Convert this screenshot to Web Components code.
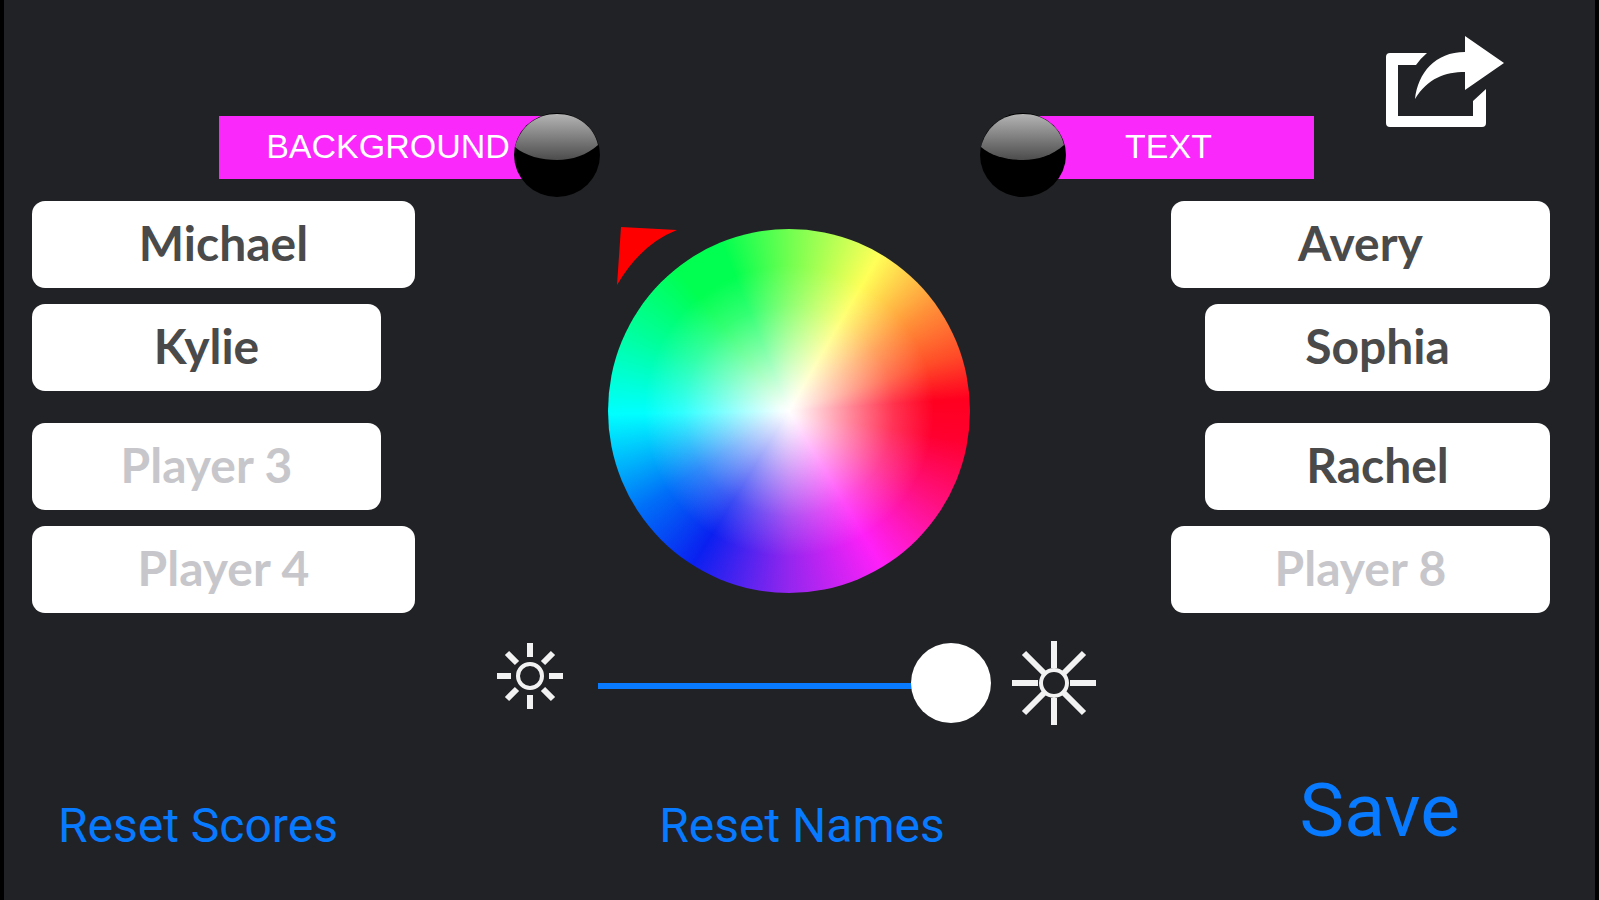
<!DOCTYPE html>
<html lang="en">
<head>
<meta charset="utf-8">
<title>Game settings</title>
<style>
  body { margin: 0; background: #000; }
</style>
</head>
<body>
<settings-screen></settings-screen>

<script>
const define = (name, html, setup) => {
  const template = document.createElement('template');
  template.innerHTML = html;
  customElements.define(name, class extends HTMLElement {
    connectedCallback() {
      if (this.shadowRoot) return;
      this.attachShadow({ mode: 'open' }).append(template.content.cloneNode(true));
      if (setup) setup(this, this.shadowRoot);
    }
  });
};

/* Coloured tab with a glossy ball at its inner end */
define('color-tab', `
  <style>
    :host { display: block; }
    button {
      display: flex; align-items: center; width: 100%; padding: 0; border: 0;
      background: none; color: #fff; cursor: pointer;
      font: 34px/40px "Helvetica Neue", "Liberation Sans", Arial, sans-serif;
    }
    .bar { flex: 1; height: 63px; box-sizing: border-box; padding-top: 10px; margin-bottom: 16px;
           background: #fa28fa; text-align: center; }
    svg { display: block; position: relative; flex: none; width: 88px; height: 84px; margin-left: -44px; }
    :host([side="right"]) button { flex-direction: row-reverse; }
    :host([side="right"]) svg { margin: 0 -44px 0 0; }
  </style>
  <button type="button">
    <span class="bar"><slot></slot></span>
    <svg viewBox="0 0 88 84" aria-hidden="true">
      <defs>
        <linearGradient id="gloss" x1="0" y1="0" x2="0" y2="1">
          <stop offset="0" stop-color="#b4b4b4"/><stop offset="1" stop-color="#4c4c4c"/>
        </linearGradient>
      </defs>
      <ellipse cx="44" cy="42" rx="43" ry="42" fill="#000"/>
      <path d="M2 34C7 14 23 1 44 1s37 13 41 31C74 42 59 47 44 47S12 43 2 34z" fill="url(#gloss)"/>
    </svg>
  </button>`);

define('share-button', `
  <style>
    :host { display: block; }
    button { display: block; padding: 0; border: 0; background: none; cursor: pointer; }
    svg { display: block; width: 120px; height: 93px; }
  </style>
  <button type="button" aria-label="Share">
    <svg viewBox="0 0 120 93" fill="#fff" aria-hidden="true">
      <path d="M5 18H42Q36 23 31 30H13V81H88V66L101 54V88Q101 92 97 92H5Q1 92 1 88V22Q1 18 5 18z"/>
      <path d="M80 1L119 28L80 55V37C60 37 43 43 30 64C33 38 50 17 80 17z"/>
    </svg>
  </button>`);

define('player-field', `
  <style>
    :host { display: block; }
    input {
      display: block; width: 100%; height: 87px; box-sizing: border-box; margin: 0;
      padding: 0 8px 4px; border: 0; border-radius: 13px; background: #fff; color: #4a4a4a;
      text-align: center; outline: 0;
      font: bold 48px/64px "Marker Felt", Lato, "Liberation Sans", sans-serif;
    }
    input::placeholder { color: #c7c7cb; opacity: 1; }
  </style>
  <input type="text">`, (host, root) => {
  const input = root.querySelector('input');
  input.setAttribute('aria-label', host.getAttribute('label'));
  input.placeholder = host.getAttribute('label');
  input.value = host.getAttribute('name') || '';
});

define('player-column', `
  <style>
    :host { display: flex; flex-direction: column; gap: 16px; }
    ::slotted(.inner) { width: calc(100% - 34px); }
    ::slotted(.lower) { margin-top: 16px; }
    :host([side="right"]) { align-items: flex-end; }
    ::slotted(:not(.inner)) { width: 100%; }
  </style>
  <slot></slot>`);

define('color-wheel', `
  <style>
    :host { display: block; position: relative; width: 362px; height: 364px; }
    .disc {
      width: 100%; height: 100%; border-radius: 50%;
      background:
        radial-gradient(closest-side, #fff 0, rgba(255,255,255,.95) 5%, rgba(255,255,255,.5) 36%, rgba(255,255,255,.2) 58%, rgba(255,255,255,0) 80%),
        conic-gradient(#70ff50 0deg, #ffff58 30deg, #ff9038 54deg, #ff4a28 72deg, #ff0020 86deg, #ff0030 100deg,
          #ff1080 122deg, #ff20f8 149deg, #9426ee 180deg, #0a20f0 212deg, #0070f8 237deg,
          #00ffff 269deg, #00ff98 298deg, #00ff50 322deg, #00ff50 338deg, #70ff50 360deg);
    }
    svg { position: absolute; left: 8px; top: -3px; width: 63px; height: 60px; }
  </style>
  <div class="disc" role="img" aria-label="Color wheel"></div>
  <svg viewBox="0 0 63 60" aria-hidden="true"><path d="M5 1L61 4Q25 18 1 59z" fill="#f00"/></svg>`);

define('brightness-slider', `
  <style>
    :host { display: flex; align-items: center; }
    svg { display: block; flex: none; fill: none; stroke: #f2f2f2; }
    .dim { width: 66px; height: 70px; align-self: flex-start; margin-right: 35px; }
    .bright { width: 84px; height: 84px; margin-left: 21px; }
    input {
      flex: 1; min-width: 0; height: 80px; margin: 0; appearance: none; -webkit-appearance: none;
      background: linear-gradient(#087aff, #087aff) 0 40px / calc(100% - 20px) 6px no-repeat;
    }
    input::-webkit-slider-thumb {
      -webkit-appearance: none; width: 80px; height: 80px; border-radius: 50%; background: #fff;
    }
  </style>
  <svg class="dim" viewBox="0 0 66 70" stroke-width="6" aria-hidden="true">
    <circle cx="33" cy="35" r="12" stroke-width="4"/>
    <path d="M33 2v14M33 54v14M0 35h14M52 35h14M10 12l10 10M46 48l10 10M56 12L46 22M20 48L10 58"/>
  </svg>
  <input type="range" min="0" max="100" value="100" aria-label="Brightness">
  <svg class="bright" viewBox="0 0 84 84" stroke-width="6" aria-hidden="true">
    <circle cx="42" cy="42" r="13" stroke-width="4"/>
    <path d="M42 0v27M42 57v27M0 42h26M58 42h26M12 12l20 20M52 52l20 20M72 12L52 32M32 52L12 72"/>
  </svg>`);

define('text-action', `
  <style>
    :host { display: block; }
    button {
      display: block; padding: 0; border: 0; background: none; color: #087aff; cursor: pointer;
      font: 48px/56px Roboto, "Liberation Sans", sans-serif; white-space: nowrap;
    }
    :host([size="large"]) button { font-size: 75px; line-height: 88px; }
  </style>
  <button type="button"><slot></slot></button>`);

define('settings-screen', `
  <style>
    :host {
      display: flex; flex-direction: column; box-sizing: border-box; min-height: 100vh;
      margin: 0 4px; background: #202225;
    }
    header {
      display: flex; align-items: flex-end; box-sizing: border-box; height: 201px;
      padding: 35px 90px 4px 215px;
    }
    .background { width: 382px; }
    .text { width: 335px; margin-left: auto; }
    share-button { align-self: flex-start; margin-left: 71px; }
    main {
      display: grid; grid-template-columns: 383px 1fr 379px; padding: 0 45px 0 28px;
    }
    .picker { display: flex; flex-direction: column; align-items: center; padding-top: 28px; gap: 48px; }
    color-wheel { margin-right: 8px; }
    brightness-slider { width: 599px; margin-left: 6px; }
    footer {
      display: grid; grid-template-columns: 1fr auto 1fr; align-items: end;
      margin-top: auto; padding: 0 49px 46px 54px;
    }
    .save { justify-self: end; margin-right: 86px; }
  </style>
  <header>
    <color-tab class="background" side="left">BACKGROUND</color-tab>
    <color-tab class="text" side="right">TEXT</color-tab>
    <share-button></share-button>
  </header>
  <main>
    <player-column side="left">
      <player-field label="Player 1" name="Michael"></player-field>
      <player-field class="inner" label="Player 2" name="Kylie"></player-field>
      <player-field class="inner lower" label="Player 3"></player-field>
      <player-field label="Player 4"></player-field>
    </player-column>
    <div class="picker">
      <color-wheel></color-wheel>
      <brightness-slider></brightness-slider>
    </div>
    <player-column side="right">
      <player-field label="Player 5" name="Avery"></player-field>
      <player-field class="inner" label="Player 6" name="Sophia"></player-field>
      <player-field class="inner lower" label="Player 7" name="Rachel"></player-field>
      <player-field label="Player 8"></player-field>
    </player-column>
  </main>
  <footer>
    <text-action>Reset Scores</text-action>
    <text-action>Reset Names</text-action>
    <text-action class="save" size="large">Save</text-action>
  </footer>`);
</script>
</body>
</html>
